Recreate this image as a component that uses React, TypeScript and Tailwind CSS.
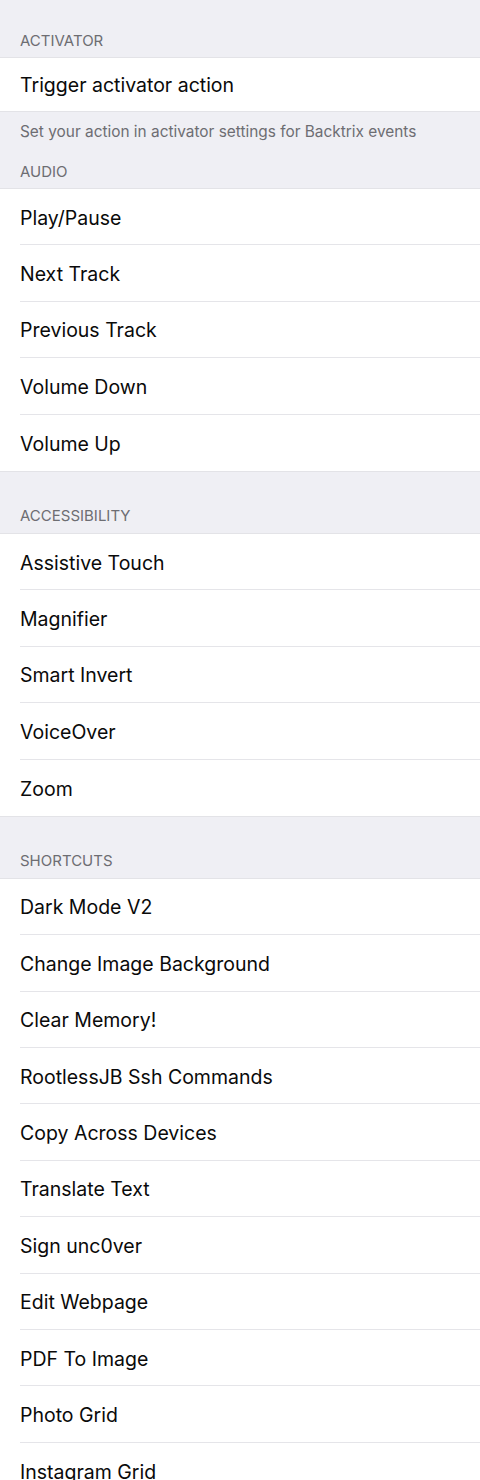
import React from 'react';

type Section = {
  title: string;
  items: string[];
  footer?: string;
};

const sections: Section[] = [
  {
    title: 'ACTIVATOR',
    items: ['Trigger activator action'],
    footer: 'Set your action in activator settings for Backtrix events',
  },
  {
    title: 'AUDIO',
    items: ['Play/Pause', 'Next Track', 'Previous Track', 'Volume Down', 'Volume Up'],
  },
  {
    title: 'ACCESSIBILITY',
    items: ['Assistive Touch', 'Magnifier', 'Smart Invert', 'VoiceOver', 'Zoom'],
  },
  {
    title: 'SHORTCUTS',
    items: [
      'Dark Mode V2',
      'Change Image Background',
      'Clear Memory!',
      'RootlessJB Ssh Commands',
      'Copy Across Devices',
      'Translate Text',
      'Sign unc0ver',
      'Edit Webpage',
      'PDF To Image',
      'Photo Grid',
      'Instagram Grid',
    ],
  },
];

// gray gap above each group, measured from the screenshot
const headerHeights = ['h-[57px]', 'h-[38px]', 'h-[61px]', 'h-[61px]'];

export default function App() {
  return (
    <div
      className="w-[480px] h-[1480px] overflow-hidden bg-[#efeff4]"
      style={{ fontFamily: 'Inter, "Noto Sans", sans-serif' }}
    >
      {sections.map((section, si) => (
        <div key={section.title}>
          <div className={`${headerHeights[si]} flex items-end px-5 pb-[9.5px]`}>
            <span className="text-[15px] leading-none text-[#6d6d72]">{section.title}</span>
          </div>
          <div className="bg-white border-y border-[#e3e3e7]">
            {section.items.map((item, i) => (
              <div key={item} className="pl-5">
                <div
                  className={`${
                    section.items.length === 1 ? 'h-[53px]' : 'h-[56.4px]'
                  } flex items-center pt-[3px] text-[19.5px] text-[#0a0a0a] ${
                    i < section.items.length - 1 ? 'border-b border-[#e5e5e9]' : ''
                  }`}
                >
                  {item}
                </div>
              </div>
            ))}
          </div>
          {section.footer && (
            <div className="h-[38px] px-5 pt-[11.5px]">
              <span className="block text-[15.4px] leading-none text-[#6d6d72]">{section.footer}</span>
            </div>
          )}
        </div>
      ))}
    </div>
  );
}
